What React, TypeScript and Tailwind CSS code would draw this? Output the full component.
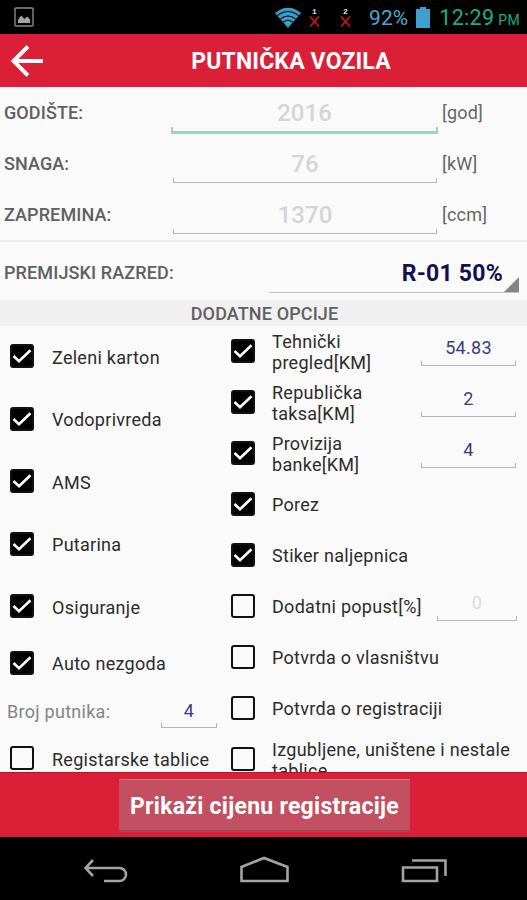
import clsx from "clsx";
import { useState } from "react";

const specs = [
  { label: "GODIŠTE:", value: "2016", unit: "[god]", active: true },
  { label: "SNAGA:", value: "76", unit: "[kW]", active: false },
  { label: "ZAPREMINA:", value: "1370", unit: "[ccm]", active: false },
];

const leftOptions = [
  { label: "Zeleni karton", checked: true },
  { label: "Vodoprivreda", checked: true },
  { label: "AMS", checked: true },
  { label: "Putarina", checked: true },
  { label: "Osiguranje", checked: true },
];

const rightOptions = [
  { label: "Tehnički pregled[KM]", checked: true, value: "54.83" },
  { label: "Republička taksa[KM]", checked: true, value: "2" },
  { label: "Provizija banke[KM]", checked: true, value: "4" },
  { label: "Porez", checked: true },
  { label: "Stiker naljepnica", checked: true },
  { label: "Dodatni popust[%]", checked: false, value: "0", disabled: true },
  { label: "Potvrda o vlasništvu", checked: false },
  { label: "Potvrda o registraciji", checked: false },
  { label: "Izgubljene, uništene i nestale tablice", checked: false },
];

function Checkbox({ initial }: { initial: boolean }) {
  const [checked, setChecked] = useState(initial);

  return (
    <button
      type="button"
      role="checkbox"
      aria-checked={checked}
      onClick={() => setChecked(!checked)}
      className={clsx(
        "mb-[2px] size-6 shrink-0 rounded-[3px] border-2 border-[#111]",
        checked ? "bg-black" : "bg-transparent"
      )}
    >
      {checked && (
        <svg viewBox="0 0 20 20" className="size-5" fill="none" stroke="#fff" strokeWidth="2.6">
          <path d="M1.500 10l5.500 5.300L18.500 4.200" />
        </svg>
      )}
    </button>
  );
}

function Line({ className = "h-[5px] border-x border-b border-[#b5b5b5]" }: { className?: string }) {
  return <div className={className} />;
}

function StatusBar() {
  return (
    <div className="flex h-[34px] shrink-0 items-center bg-black pl-[14px] pr-[7px]">
      <svg width="20" height="20" viewBox="0 0 20 20">
        <rect x="1" y="1" width="18" height="18" rx="1" fill="none" stroke="#8a8a8a" strokeWidth="1.4" />
        <path d="M4 16v-3l2-3 1.500-1.500 1.500 2 1.500 1.500 2-2 2 .5 1.500 2.500v3z" fill="#a5a5a5" />
      </svg>
      <svg className="ml-[240px]" width="28" height="21" viewBox="0 0 28 21">
        <path d="M1 6Q14-4.500 27 6L14 21z" fill="#3b9fcb" />
        <g fill="none" stroke="#000" strokeWidth="1.100">
          <path d="M3.500 8.500q10.500-8 21 0" />
          <path d="M6.500 12q7.500-6 15 0" />
          <path d="M9 15.300q5-4 10 0" />
        </g>
      </svg>
      <div className="ml-[5px] flex w-[15px] flex-col items-center">
        <span className="h-[8px] font-mono text-[8px] leading-[8px] font-bold text-[#ddd]">1</span>
        <svg width="11" height="11" viewBox="0 0 11 11" stroke="#c4150f" strokeWidth="1.700">
          <path d="M1 .5l9 10M10 .5l-9 10" />
        </svg>
      </div>
      <div className="ml-[16px] flex w-[15px] flex-col items-center">
        <span className="h-[8px] font-mono text-[8px] leading-[8px] font-bold text-[#ddd]">2</span>
        <svg width="11" height="11" viewBox="0 0 11 11" stroke="#c4150f" strokeWidth="1.700">
          <path d="M1 .5l9 10M10 .5l-9 10" />
        </svg>
      </div>
      <span className="ml-[16px] w-[40px] pt-px text-[21px] leading-[34px] tracking-[0.1px] whitespace-nowrap text-[#4aa9d6]">92%</span>
      <svg className="ml-[7px]" width="14" height="21" viewBox="0 0 14 21" fill="#3fa0cc">
        <path d="M4 0h6v2h4v19H0V2h4z" />
      </svg>
      <div className="ml-auto flex items-baseline pt-[2px] whitespace-nowrap text-[#13b184]">
        <span className="text-[21.5px] leading-[34px] tracking-[0.3px]">12:29</span>
        <span className="ml-1 text-[14px] tracking-[0.3px]">PM</span>
      </div>
    </div>
  );
}

export default function App() {
  return (
    <div className="flex h-[900px] w-[527px] flex-col overflow-hidden bg-[#fafafa] font-['Roboto',sans-serif]">
      <StatusBar />

      <header className="grid h-[53px] shrink-0 grid-cols-[55px_1fr] items-center bg-[#da1f37] text-white">
        <svg className="ml-[10px]" width="34" height="32" viewBox="0 0 34 32" fill="none" stroke="#fff" strokeWidth="3.900">
          <path d="M18 1.500L3.500 16 18 30.500M3 16h30" />
        </svg>
        <h1 className="pt-[3px] text-center text-[23px] font-bold tracking-[0.15px]">PUTNIČKA VOZILA</h1>
      </header>

      <main className="h-[685px] shrink-0 overflow-hidden">
        <section className="h-[155px] border-b-2 border-[#eee]">
          {specs.map((s) => (
            <div key={s.label} className="flex h-[51px] pl-1">
              <span className="w-[168px] text-[18px] leading-[52px] font-medium tracking-[0.1px] text-[#606060]">{s.label}</span>
              <div className={clsx("h-[47px]", s.active ? "-ml-px w-[267px]" : "ml-px mr-px w-[264px]")}>
                <div className="h-10 text-center text-[24px] leading-[52px] font-medium text-[#d5d5d5]">{s.value}</div>
                <Line
                  className={
                    s.active
                      ? "h-[7px] border-x-2 border-b-3 border-[#a5d1c0]"
                      : "h-[5px] border-x border-b border-[#b5b5b5]"
                  }
                />
              </div>
              <span className="ml-1 text-[18px] leading-[52px] tracking-[0.2px] text-[#666]">{s.unit}</span>
            </div>
          ))}
        </section>

        <section className="flex h-[58px] pl-1">
          <span className="w-[265px] text-[18px] leading-[62px] font-medium tracking-[0.12px] text-[#606060]">PREMIJSKI RAZRED:</span>
          <div className="flex h-[51px] w-[250px] items-end border-b border-[#c2c2c2]">
            <span className="flex-1 text-right text-[23px] leading-[37px] font-bold tracking-[0.25px] text-[#10104f]">R-01 50%</span>
            <svg width="16" height="15" viewBox="0 0 16 15" fill="#858585">
              <path d="M16 0v15H1z" />
            </svg>
          </div>
        </section>

        <h2 className="h-[26px] bg-[#f0f0f0] pl-[2px] text-center text-[18px] leading-[28px] font-medium tracking-[0.12px] text-[#606060]">
          DODATNE OPCIJE
        </h2>

        <div className="grid grid-cols-[221px_306px] text-[18px] leading-[21px] tracking-[0.28px] text-[#2c2c2c]">
          <div>
            {leftOptions.map((o) => (
              <div key={o.label} className="flex h-[62.5px] items-center pl-[10px]">
                <Checkbox initial={o.checked} />
                <span className="ml-[18px]">{o.label}</span>
              </div>
            ))}
            <div className="flex h-[50px] items-center pl-[10px]">
              <Checkbox initial={true} />
              <span className="ml-[18px]">Auto nezgoda</span>
            </div>
            <div className="flex h-[45px] pl-[7px]">
              <span className="w-[154px] pt-[12px] text-[#858585]">Broj putnika:</span>
              <div className="w-[56px]">
                <div className="h-[34px] pt-[11px] text-center text-[#3a3d80]">4</div>
                <Line />
              </div>
            </div>
            <div className="flex h-[51px] items-center pl-[10px]">
              <Checkbox initial={false} />
              <span className="ml-[18px] pt-px whitespace-nowrap">Registarske tablice</span>
            </div>
          </div>

          <div>
            {rightOptions.map((o) => (
              <div key={o.label} className="flex h-[51px] items-center pl-[10px]">
                <Checkbox initial={o.checked} />
                <span className={clsx("ml-[17px]", o.value && !o.disabled ? "w-[120px]" : o.disabled ? "w-[155px] whitespace-nowrap" : "w-[250px]")}>
                  {o.label}
                </span>
                {o.value && (
                  <div className={clsx("ml-auto self-start", o.disabled ? "mr-[10px] w-[80px]" : "mr-[11px] w-[95px]")}>
                    <div className={clsx("h-[35px] pt-[11px] text-center", o.disabled ? "text-[#dadada]" : "text-[#3a3d80]")}>
                      {o.value}
                    </div>
                    <Line />
                  </div>
                )}
              </div>
            ))}
          </div>
        </div>
      </main>

      <footer className="h-[65px] shrink-0 border-t border-[#c80d1c] bg-[#da1f37] pt-[6px]">
        <button
          type="button"
          className="ml-[119px] block h-[53px] w-[291px] border-t border-b-2 border-t-[#cf7281] border-b-[#a84452] bg-[#c25061] pt-[4px] text-[23px] font-bold tracking-[0.27px] whitespace-nowrap text-white"
        >
          Prikaži cijenu registracije
        </button>
      </footer>

      <nav className="flex h-[63px] shrink-0 bg-black">
        <svg width="527" height="63" viewBox="0 0 527 63" fill="none" stroke="#a3a3a3" strokeWidth="2.600">
          <path d="M93 23l-7.500 8 7.500 8M86 31h33.500a6.500 6.500 0 0 1 0 13H104" />
          <path d="M241.500 44V30L264 21l23.500 9v14z" />
          <path d="M403 30.500h34V44h-34zM412 23.500h33.500V39" />
        </svg>
      </nav>
    </div>
  );
}
